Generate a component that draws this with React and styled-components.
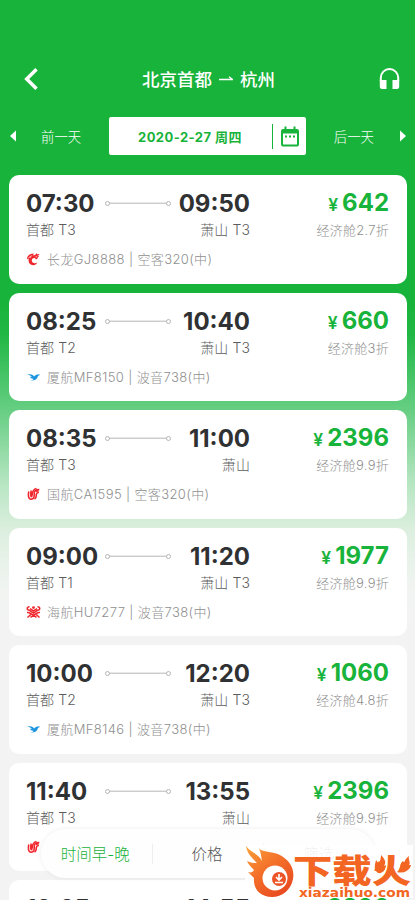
import React from 'react'
import styled, { createGlobalStyle } from 'styled-components'

const GlobalStyle = createGlobalStyle`
* {
    box-sizing: border-box;
}

body {
    margin: 0;
    background: #f4f3f4;
    font-family: Inter, "Noto Sans CJK SC", sans-serif;
    font-optical-sizing: none;
}
`

const Page = styled.div`
position: relative;
width: 415px;
height: 900px;
overflow: hidden;
background: linear-gradient(#18b33a 0, #18b33a 300px, #21b745 335px, #5ccb7a 400px, #b8e6c3 485px, #dcefdf 530px, #f0f4f1 585px, #f4f3f4 625px);
`

const TitleBar = styled.header`
display: flex;
align-items: center;
justify-content: space-between;
height: 117px;
padding: 40px 15px 0 24px;
color: #fff;
`

const Title = styled.h1`
display: flex;
align-items: center;
gap: 7px;
margin: 0;
padding-top: 2px;
font-size: 17.5px;
font-weight: 500;
line-height: 24px;
`

const DateBar = styled.div`
display: flex;
align-items: center;
justify-content: space-between;
height: 38px;
padding: 0 9px 0 10px;
color: #fff;
font-size: 13.4px;
font-weight: 300;
`

const DayLink = styled.span`
display: flex;
align-items: center;
gap: ${props => props.$next ? '26px' : '25px'};
`

const DateBox = styled.div`
display: flex;
align-items: center;
width: 197px;
height: 38px;
border-radius: 2px;
background: #fff;
color: #18b33a;
`

const DateText = styled.span`
flex: 1;
padding-left: 29px;
font-size: 13px;
font-weight: 700;
letter-spacing: .45px;
white-space: nowrap;
`

const DateIcon = styled.span`
display: flex;
align-items: center;
height: 25px;
padding: 0 7px 0 8px;
border-left: 1px solid #18b33a;
`

const List = styled.main`
display: flex;
flex-direction: column;
gap: 9px;
padding: 20.3px 8px 0 9px;
`

const Card = styled.article`
display: flex;
justify-content: space-between;
flex: none;
height: 108.5px;
padding: 14px 18px 0 17px;
border-radius: 10px;
background: #fff;
`

const Trip = styled.div`
width: 224px;
`

const Row = styled.div`
display: flex;
align-items: center;
justify-content: space-between;
`

const Time = styled.span`
width: 79px;
padding-top: 1px;
color: #303133;
font-size: 24px;
font-weight: 700;
line-height: 27px;
text-align: ${props => props.$end ? 'right' : 'left'};
`

const Airport = styled.span`
color: #5c5c5c;
font-size: 14px;
font-weight: 300;
letter-spacing: .1px;
line-height: 26px;
`

const Flight = styled.div`
display: flex;
align-items: center;
gap: 6px;
height: 26px;
margin-top: 3px;
color: #8f8f8f;
font-size: 13px;
font-weight: 300;
letter-spacing: .38px;
line-height: 26px;
white-space: nowrap;
`

const Fare = styled.div`
text-align: right;
`

const Price = styled.div`
height: 27px;
color: #18b33a;
font-size: 24px;
font-weight: 700;
line-height: 27px;
`

const Yen = styled.span`
margin-right: 4px;
font-size: 17.5px;
font-weight: 600;
`

const Discount = styled.div`
margin-top: 1px;
color: #8f8f8f;
font-size: 13px;
font-weight: 300;
letter-spacing: .25px;
line-height: 26px;
`

const SortBar = styled.nav`
position: absolute;
left: 41px;
top: 829px;
display: flex;
align-items: center;
width: 334px;
height: 49px;
border-radius: 25px;
background: #fefefe;
box-shadow: 0 0 5px rgba(0, 0, 0, .07);
`

const SortItem = styled.span`
flex: 1;
padding: 2px 2px 0 0;
text-align: center;
color: ${props => props.$color};
font-size: 15.5px;
font-weight: 300;
line-height: 18px;

& + & {
    border-left: 1px solid #eee;
}
`

const Badge = styled.div`
position: absolute;
left: 243px;
top: 843px;
width: 172px;
height: 57px;
`

const RED = '#f0262d'

function CarrierLogo({ code }) {
    if (code === 'GJ') {
        return (
            <svg width="15" height="14" viewBox="0 0 15 14" fill={RED}>
                <path d="M7.5 1.5C3 2 .6 4.300 1.200 7.500L3 6.300C1.600 9.500 3.500 13 7 13.300C9.200 13.400 10.500 12.300 11 10.500C8.800 12 6 11 5.800 8.800C5.600 6.600 7.500 5.500 9 6.200L10 7.500C11.500 7 12 6 11.700 5L13.300 4.200L12 3.500L13.800 2L11 2.300L10.300 1L9.500 2.800L7.300 3.500Z" />
                <path d="M2 5.500L6.500 2.800L4.500 6Z M9 5L11.500 3.300L10.300 5.500Z" fill="#fff" opacity=".65" />
            </svg>
        )
    }
    if (code === 'MF') {
        return (
            <svg width="15" height="14" viewBox="0 0 15 14" fill="#1c94e0">
                <path d="M.8 4C4 3.900 6.800 4.700 8.200 6.400C9.700 4.700 11.500 4.300 14.200 4.700L12 5.900C11.300 9.200 8.500 11 4.200 10.500C6 10.200 7 9.700 7.600 8.900C5.300 8.700 4.300 7.900 4 6.800L6 7C4.500 5.500 3 4.700 .8 4Z" />
            </svg>
        )
    }
    if (code === 'CA') {
        return (
            <svg width="15" height="14" viewBox="0 0 15 14" fill="none" stroke={RED} strokeWidth="1.600">
                <path d="M2.800 4.500C2 8 2.200 12 5 12.200C8 12.400 8.300 9.500 8.200 7C8.100 4 10 2.500 13.300 2.600" />
                <path d="M5.200 3.500C4.600 7 4.700 9.700 5.500 9.600C6.700 9.500 5 2.500 10.500 1.500" />
                <path d="M8.500 12C11 10.500 10 9 10.300 7.500C10.600 6 11.500 5.400 12.900 5.200M10 4.500L12.500 3.500" />
            </svg>
        )
    }
    return (
        <svg width="15" height="14" viewBox="0 0 15 14" fill="none" stroke={RED} strokeWidth="1.500">
            <path d="M3.500 1.800C.5 2 .5 5.200 3.500 5.300L7.500 8L11.500 5.300C14.500 5.200 14.500 2 11.500 1.800" />
            <path d="M1 7.500C4 6.600 5 10 7.500 10C10 10 11 6.600 14 7.500M1.500 12.500L4.700 9.500M13.500 12.500L10.300 9.500M4.500 12.300L6 11.300H9L10.500 12.300" />
            <path d="M4 3.700L7.500 6L11 3.700" />
            <circle cx="7.500" cy="2.600" r=".7" fill={RED} />
        </svg>
    )
}

function RouteLine() {
    return (
        <svg width="66" height="8" viewBox="0 0 66 8" fill="none" stroke="#b5b5b5">
            <circle cx="2.500" cy="4.500" r="2" />
            <circle cx="63.500" cy="4.500" r="2" />
            <path d="M4.500 4.200H61.500" />
        </svg>
    )
}

function Triangle({ right }) {
    return (
        <svg width="6" height="12" viewBox="0 0 6 12" fill="#fff">
            <path d={right ? 'M0 .5L6 6L0 11.500Z' : 'M6 .5L0 6L6 11.500Z'} />
        </svg>
    )
}

const flights = [
    { dep: '07:30', arr: '09:50', from: '首都 T3', to: '萧山 T3', code: 'GJ', info: '长龙GJ8888 | 空客320(中)', price: '642', off: '2.7' },
    { dep: '08:25', arr: '10:40', from: '首都 T2', to: '萧山 T3', code: 'MF', info: '厦航MF8150 | 波音738(中)', price: '660', off: '3' },
    { dep: '08:35', arr: '11:00', from: '首都 T3', to: '萧山', code: 'CA', info: '国航CA1595 | 空客320(中)', price: '2396', off: '9.9' },
    { dep: '09:00', arr: '11:20', from: '首都 T1', to: '萧山 T3', code: 'HU', info: '海航HU7277 | 波音738(中)', price: '1977', off: '9.9' },
    { dep: '10:00', arr: '12:20', from: '首都 T2', to: '萧山 T3', code: 'MF', info: '厦航MF8146 | 波音738(中)', price: '1060', off: '4.8' },
    { dep: '11:40', arr: '13:55', from: '首都 T3', to: '萧山', code: 'CA', info: '', price: '2396', off: '9.9' },
    { dep: '12:25', arr: '14:55', from: '首都 T3', to: '萧山', code: 'CA', info: '', price: '2396', off: '9.9' },
]

function FlightCard({ flight }) {
    return (
        <Card>
            <Trip>
                <Row>
                    <Time>{flight.dep}</Time>
                    <RouteLine />
                    <Time $end>{flight.arr}</Time>
                </Row>
                <Row>
                    <Airport>{flight.from}</Airport>
                    <Airport>{flight.to}</Airport>
                </Row>
                <Flight>
                    <CarrierLogo code={flight.code} />
                    <span>{flight.info}</span>
                </Flight>
            </Trip>
            <Fare>
                <Price><Yen>¥</Yen>{flight.price}</Price>
                <Discount>经济舱{flight.off}折</Discount>
            </Fare>
        </Card>
    )
}

function SiteBadge() {
    return (
        <Badge>
            <svg width="172" height="57" viewBox="0 0 172 57">
                <defs>
                    <linearGradient id="flame" x1="0" y1="0" x2=".7" y2="1">
                        <stop offset="0" stopColor="#f9a13a" />
                        <stop offset=".5" stopColor="#f4702a" />
                        <stop offset="1" stopColor="#e84a20" />
                    </linearGradient>
                </defs>
                <rect x="2" y="2" width="168" height="53" fill="#fff" opacity=".9" />
                <path d="M3 3C8 10 15 10 19 18C18 13 18 9 16 6C23 10 29 8 37 12C46 17 52 25 50 36C48 47 39 54 29 54C17 54 10 46 11 35C9 33 7 31 5 29C8 30 10 29 11 27C8 24 5 21 4 18C8 20 11 20 14 20C8 14 4 10 3 3Z" fill="url(#flame)" />
                <circle cx="32" cy="35" r="12.500" fill="#fff" />
                <circle cx="36" cy="36" r="7" fill="#ec5425" />
                <path d="M36 31V36M33 34L36 37L39 34M32 39.500H40" fill="none" stroke="#fff" strokeWidth="1.600" />
                <text x="50" y="39.500" fill="#f26522" fontSize="33" fontWeight="900" fontFamily="'Noto Sans CJK SC', sans-serif" textLength="118" lengthAdjust="spacingAndGlyphs">下载火</text>
                <path d="M135 30C130 26 132 22 133 17L136 21C137 18 138 15 138 12C143 17 143 20 141 23L143 22C143 26 140 31 135 30ZM154 29C158 27 156 22 159 19L161 22C161 18 163 15 166 13C165 17 168 19 166 22L168 22C167 27 161 31 154 29Z" fill="#f26522" />
                <text x="56" y="53.500" fill="#f26522" fontSize="12.500" fontWeight="700" fontFamily="'DejaVu Sans', sans-serif" textLength="111" lengthAdjust="spacingAndGlyphs">xiazaihuo.com</text>
            </svg>
        </Badge>
    )
}

export default function App() {
    return (
        <Page>
            <GlobalStyle />
            <TitleBar>
                <svg width="14" height="22" viewBox="0 0 14 22" fill="none" stroke="#fff" strokeWidth="3.500">
                    <path d="M12.500 1.200L2.700 11L12.500 20.800" />
                </svg>
                <Title>
                    北京首都
                    <svg width="14" height="8" viewBox="0 0 14 8" fill="none" stroke="#fff" strokeWidth="1.300">
                        <path d="M0 3.500H13.500L10 .8" />
                    </svg>
                    杭州
                </Title>
                <svg width="21" height="22" viewBox="0 0 21 22">
                    <path d="M1.800 13V9.800a8.700 8.700 0 0 1 17.400 0V13" fill="none" stroke="#fff" strokeWidth="2" />
                    <path d="M.8 12H7.500V21H3.300Q.8 21 .8 18.500ZM13.500 12H20.200V18.500Q20.200 21 17.700 21H13.500Z" fill="#fff" />
                </svg>
            </TitleBar>
            <DateBar>
                <DayLink><Triangle />前一天</DayLink>
                <DateBox>
                    <DateText>2020-2-27 周四</DateText>
                    <DateIcon>
                        <svg width="18" height="21" viewBox="0 0 18 21" fill="#18b33a">
                            <path fillRule="evenodd" d="M2 3H3.500V.5H5.500V3H12.500V.5H14.500V3H16Q18 3 18 5V18.500Q18 20.500 16 20.500H2Q0 20.500 0 18.500V5Q0 3 2 3ZM2 7.500V18.500H16V7.500Z" />
                            <path d="M4 9.500H6V11.500H4ZM8 9.500H10V11.500H8ZM12 9.500H14V11.500H12Z" />
                        </svg>
                    </DateIcon>
                </DateBox>
                <DayLink $next>后一天<Triangle right /></DayLink>
            </DateBar>
            <List>
                {flights.map(flight => <FlightCard key={flight.dep} flight={flight} />)}
            </List>
            <SortBar>
                <SortItem $color="#18b33a">时间早-晚</SortItem>
                <SortItem $color="#555">价格</SortItem>
                <SortItem $color="#777">筛选</SortItem>
            </SortBar>
            <SiteBadge />
        </Page>
    )
}
